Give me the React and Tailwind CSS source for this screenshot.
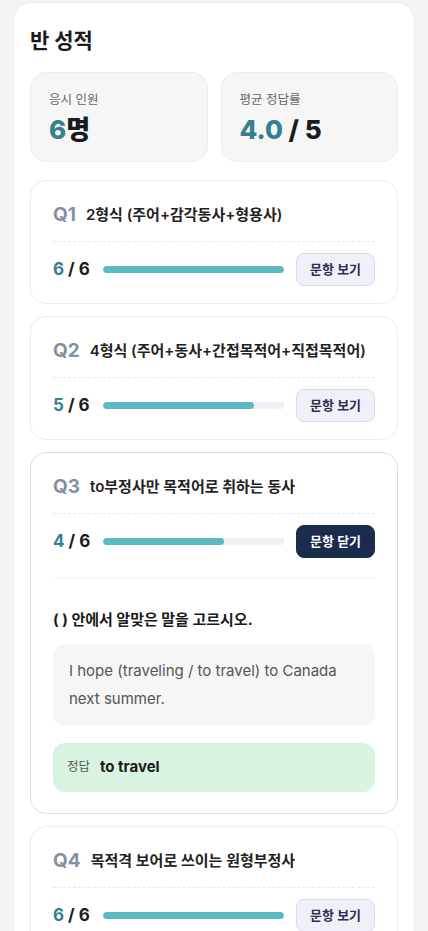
import { useState } from 'react';

const questions = [
    { no: 1, title: '2형식 (주어+감각동사+형용사)', correct: 6 },
    { no: 2, title: '4형식 (주어+동사+간접목적어+직접목적어)', correct: 5 },
    {
        no: 3,
        title: 'to부정사만 목적어로 취하는 동사',
        correct: 4,
        prompt: '( ) 안에서 알맞은 말을 고르시오.',
        sentence: 'I hope (traveling / to travel) to Canada next summer.',
        answer: 'to travel',
    },
    { no: 4, title: '목적격 보어로 쓰이는 원형부정사', correct: 6 },
];

const TOTAL = 6;

function QuestionCard({ q, open, onToggle }) {
    const pct = (q.correct / TOTAL) * 100;

    return (
        <div className={`bg-white rounded-2xl border px-[22px] pt-[22px] pb-[17px] ${open ? 'border-[#d3dded]' : 'border-[#ececef]'}`}>
            {/* --- Заголовок вопроса --- */}
            <div className="flex items-center gap-[10px] h-[24px] pb-[14px] box-content border-b border-dashed border-[#e6e7ea]">
                <span className="text-[19px] font-bold text-[#8591a3] leading-[24px]">Q{q.no}</span>
                <span className="text-[15px] font-semibold text-[#222] leading-[24px] truncate">{q.title}</span>
            </div>

            {/* --- Статистика ответов --- */}
            <div className="flex items-center pt-[11px]">
                <div className="text-[17px] font-bold leading-none whitespace-nowrap">
                    <span className="text-[#35808e]">{q.correct}</span>
                    <span className="text-[#1b1b1b]"> / {TOTAL}</span>
                </div>
                <div className="flex-1 h-[7px] ml-[13px] mr-[12px] rounded-full bg-[#edf0f4] overflow-hidden">
                    <div className="h-full rounded-full bg-[#5bb9c4]" style={{ width: `${pct}%` }} />
                </div>
                <button
                    type="button"
                    onClick={onToggle}
                    className={`w-[79px] h-[33px] rounded-lg text-[13px] font-semibold border ${open ? 'bg-[#1c2c4f] border-[#1c2c4f] text-white' : 'bg-[#eef1f7] border-[#d6dce9] text-[#2a3250]'}`}
                >
                    {open ? '문항 닫기' : '문항 보기'}
                </button>
            </div>

            {open && (
                <div className="mt-[20px] border-t border-[#eef0f3] pt-[31px] pb-[4px]">
                    <p className="text-[15px] font-bold text-[#1b1b1b] leading-[20px]">{q.prompt}</p>
                    <div className="mt-[14px] bg-[#f6f6f7] rounded-xl px-[16px] py-[13px] text-[15px] leading-[28px] text-[#555]">
                        {q.sentence}
                    </div>
                    <div className="mt-[17px] bg-[#d8f3e1] rounded-xl h-[49px] px-[14px] flex items-center gap-[10px]">
                        <span className="text-[12.5px] text-[#5a5a5a]">정답</span>
                        <span className="text-[15px] font-bold text-[#1b1b1b]">{q.answer}</span>
                    </div>
                </div>
            )}
        </div>
    );
}

function App() {
    const [openNo, setOpenNo] = useState(3);

    return (
        <div className="min-h-screen bg-[#f3f4f6] px-[13px] pt-[2px] font-['Inter','Noto_Sans_CJK_KR',sans-serif]">
            <div className="bg-white rounded-t-[18px] border border-[#ececef] px-[16px] pt-[24px] pb-[24px]">
                <h2 className="text-[21px] font-bold text-[#1b1b1b] leading-[28px]">반 성적</h2>

                {/* --- Сводка --- */}
                <div className="grid grid-cols-2 gap-[13px] mt-[17px]">
                    <div className="bg-[#f6f6f7] border border-[#ececee] rounded-2xl h-[90px] px-[18px] pt-[18px]">
                        <p className="text-[12.5px] text-[#666] leading-[18px]">응시 인원</p>
                        <p className="text-[26px] font-extrabold leading-[32px] mt-[5px] text-[#1b1b1b]">
                            <span className="text-[#35808e]">6</span>명
                        </p>
                    </div>
                    <div className="bg-[#f6f6f7] border border-[#ececee] rounded-2xl h-[90px] px-[18px] pt-[18px]">
                        <p className="text-[12.5px] text-[#666] leading-[18px]">평균 정답률</p>
                        <p className="text-[26px] font-extrabold leading-[32px] mt-[5px] text-[#1b1b1b]">
                            <span className="text-[#35808e]">4.0</span> / 5
                        </p>
                    </div>
                </div>

                {/* --- Список вопросов --- */}
                <div className="flex flex-col gap-[12px] mt-[18px]">
                    {questions.map(q => (
                        <QuestionCard
                            key={q.no}
                            q={q}
                            open={openNo === q.no}
                            onToggle={() => setOpenNo(openNo === q.no ? null : q.no)}
                        />
                    ))}
                </div>
            </div>
        </div>
    );
}

export default App;
